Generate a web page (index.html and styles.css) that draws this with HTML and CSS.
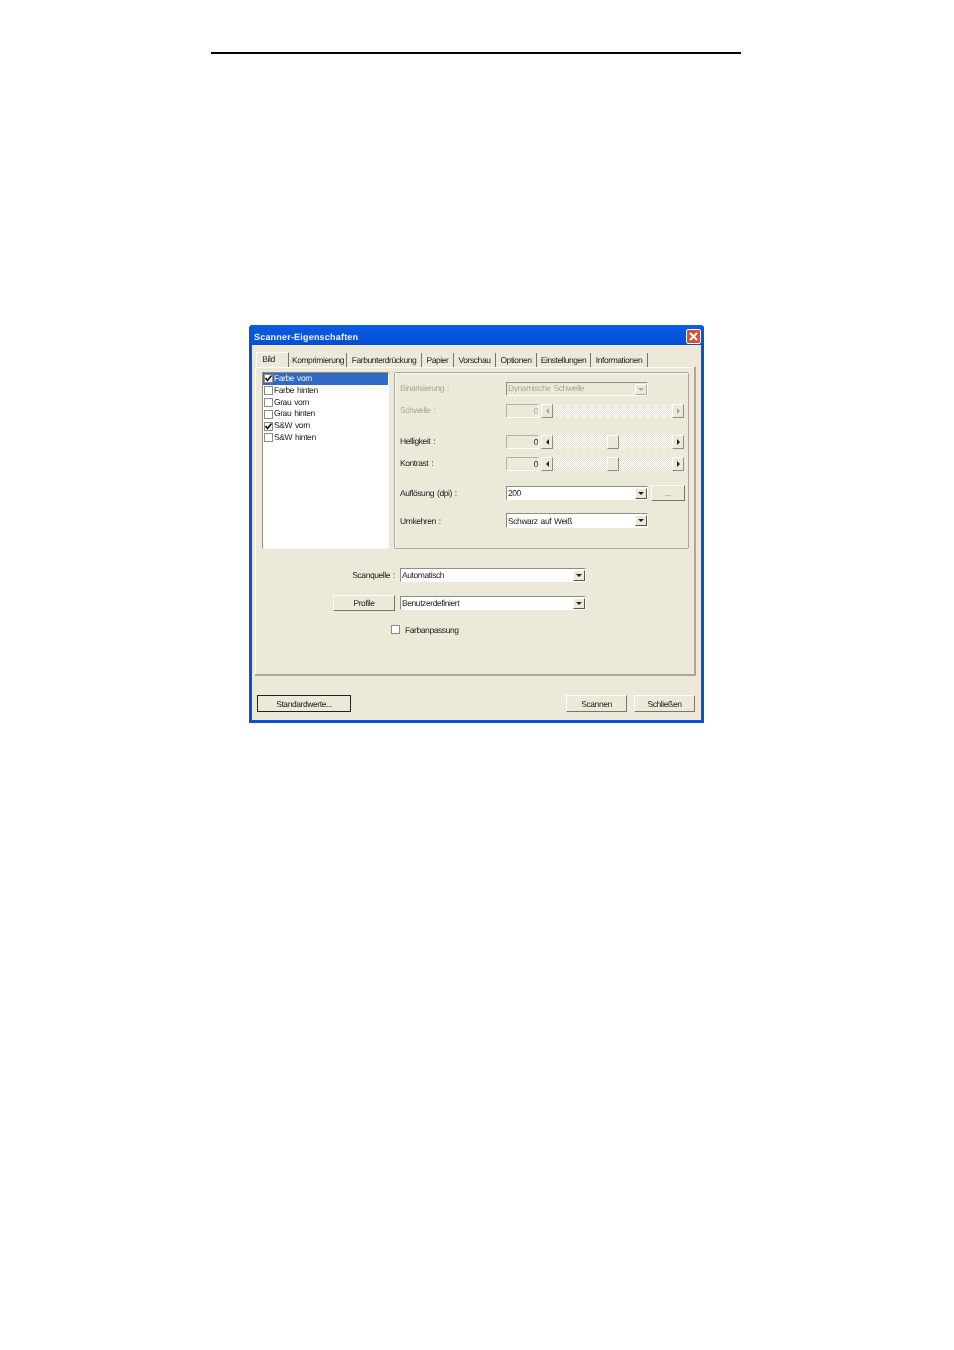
FILE: index.html
```html
<!doctype html>
<html>
<head>
<meta charset="utf-8">
<title>Scanner-Eigenschaften</title>
<link rel="stylesheet" href="styles.css">
</head>

<body>
<div class="rule"></div>
<div class="window">
	<div class="titlebar">
		<span class="title">Scanner-Eigenschaften</span>
		<span class="close">
			<svg width="15" height="15" viewBox="0 0 15 15"><path d="M4 4l7 7M11 4l-7 7" stroke="#fff" stroke-width="2" fill="none"/></svg>
		</span>
	</div>
	<div class="body">
		<ul class="tabs">
			<li class="tab active t1">Bild</li>
			<li class="tab t2">Komprimierung</li>
			<li class="tab t3">Farbunterdrückung</li>
			<li class="tab t4">Papier</li>
			<li class="tab t5">Vorschau</li>
			<li class="tab t6">Optionen</li>
			<li class="tab t7">Einstellungen</li>
			<li class="tab t8">Informationen</li>
		</ul>
		<div class="panel">
			<div class="top">
				<ul class="list">
					<li class="sel"><span class="check"><svg width="9" height="9" viewBox="0 0 9 9"><path d="M1.5 4l2 2.5L7.5 1.5" stroke="#111" stroke-width="1.6" fill="none"/></svg></span>Farbe vorn</li>
					<li><span class="check"></span>Farbe hinten</li>
					<li><span class="check"></span>Grau vorn</li>
					<li><span class="check"></span>Grau hinten</li>
					<li><span class="check"><svg width="9" height="9" viewBox="0 0 9 9"><path d="M1.5 4l2 2.5L7.5 1.5" stroke="#111" stroke-width="1.6" fill="none"/></svg></span>S&amp;W vorn</li>
					<li><span class="check"></span>S&amp;W hinten</li>
				</ul>
				<div class="group">
					<div class="row off lift">
						<label>Binarisierung :</label>
						<div class="combo"><span class="val">Dynamische Schwelle</span><span class="arrow"><i class="down"></i></span></div>
					</div>
					<div class="row off lift g8">
						<label>Schwelle :</label>
						<div class="num">0</div>
						<div class="scroller"><span class="sbtn"><i class="left"></i></span><span class="track"></span><span class="sbtn"><i class="right"></i></span></div>
					</div>
					<div class="row lift g17">
						<label>Helligkeit :</label>
						<div class="num">0</div>
						<div class="scroller"><span class="sbtn"><i class="left"></i></span><span class="track"><span class="thumb"></span></span><span class="sbtn"><i class="right"></i></span></div>
					</div>
					<div class="row lift g8">
						<label>Kontrast :</label>
						<div class="num">0</div>
						<div class="scroller"><span class="sbtn"><i class="left"></i></span><span class="track"><span class="thumb"></span></span><span class="sbtn"><i class="right"></i></span></div>
					</div>
					<div class="row g15">
						<label>Auflösung (dpi) :</label>
						<div class="combo"><span class="val">200</span><span class="arrow"><i class="down"></i></span></div>
						<div class="btn dots">...</div>
					</div>
					<div class="row tall g13">
						<label>Umkehren :</label>
						<div class="combo"><span class="val">Schwarz auf Weiß</span><span class="arrow"><i class="down"></i></span></div>
					</div>
				</div>
			</div>
			<div class="form">
				<label class="src">Scanquelle :</label>
				<div class="combo wide"><span class="val">Automatisch</span><span class="arrow"><i class="down"></i></span></div>
				<div class="btn">Profile</div>
				<div class="combo wide"><span class="val">Benutzerdefiniert</span><span class="arrow"><i class="down"></i></span></div>
			</div>
			<div class="match"><span class="check"></span>Farbanpassung</div>
		</div>
		<div class="footer">
			<div class="btn default">Standardwerte...</div>
			<div class="btn action">Scannen</div>
			<div class="btn action">Schließen</div>
		</div>
	</div>
</div>
</body>
</html>
```

FILE: styles.css
```css
ul{ padding:0; margin:0; list-style:none; }
body{ margin:0; background:#fff; font:8.5px/12px "Liberation Sans",Arial,sans-serif; letter-spacing:-.42px; word-spacing:1px; color:#1c1c1c; text-rendering:geometricPrecision; }
.rule{ width:530px; height:2px; margin:52px 0 0 211px; background:#000; }

.window{ width:455px; height:398px; margin:271px 0 0 249px; box-sizing:border-box; border:solid #0a4fd8; border-width:0 3px 3px; border-radius:4px 4px 0 0; background:#ece9d8; filter:blur(.3px); }
.titlebar{ box-sizing:border-box; height:20px; margin:0 -3px; padding:4px 3px 0 5px; display:flex; align-items:flex-start; justify-content:space-between; border-radius:4px 4px 0 0; background:linear-gradient(#0a5fe6,#0a58e0 20%,#0453dc 70%,#0a4ed0); }
.title{ padding-top:2px; font-weight:bold; font-size:9px; letter-spacing:.2px; word-spacing:0; color:#f2f6ff; }
.close{ width:15px; height:15px; border:1px solid #fff; border-radius:2px; box-sizing:border-box; display:flex; align-items:center; justify-content:center; background:#d8512c; }
.close svg{ flex:none; }

.body{ padding-top:7px; }
.tabs{ display:flex; height:15px; margin-left:4px; }
.tab{ box-sizing:border-box; padding-top:1px; text-align:center; border-right:1px solid #77746a; height:14px; margin-top:1px; }
.tab.active{ height:15px; margin-top:0; margin-right:1px; padding:0 8px 0 0; border:1px solid #fff; border-right:1px solid #77746a; border-bottom:0; }
.t1{ width:33px; }
.t2{ width:57px; }
.t3{ width:75px; }
.t4{ width:32px; }
.t5{ width:42px; }
.t6{ width:41px; }
.t7{ width:54px; }
.t8{ width:57px; }

.panel{ box-sizing:border-box; width:441px; height:309px; margin-left:3px; padding:5px 0 0 7px; border:solid #aca899; border-width:0 2px 2px 0; box-shadow:inset 1px 1px 0 #fff; }
.top{ display:flex; gap:5px; height:177px; }
.list{ box-sizing:border-box; width:127px; background:#fff; border-left:1px solid #8f8c80; border-top:1px solid #8f8c80; border-bottom:1px solid #f4f3ec; }
.list li{ height:11.8px; line-height:11.8px; display:flex; align-items:center; gap:1px; padding-left:1px; margin-right:1px; }
.list li.sel{ background:#316ac5; color:#f0f0f8; }
.check{ box-sizing:border-box; width:9px; height:9px; flex:none; display:inline-flex; border:1px solid #8a8a8a; background:#fff; }
.check svg{ flex:none; margin:-1px; }

.group{ box-sizing:border-box; width:295px; padding:9px 0 0 5px; border:1px solid #aca899; border-radius:2px; box-shadow:inset 1px 1px 0 #fff; }
.row{ display:flex; align-items:center; height:14px; }
.row label{ width:106px; flex:none; }
.lift label, .lift .val{ padding-bottom:2px; }
.off{ color:#aca899; }
.g8{ margin-top:8px; }
.g13{ margin-top:13px; }
.g15{ margin-top:15px; }
.g17{ margin-top:17px; }

.combo{ box-sizing:border-box; width:142px; height:14px; display:flex; align-items:center; justify-content:space-between; background:#fff; border:1px solid #8f8c80; border-right-color:#fff; border-bottom-color:#fff; }
.tall{ height:15px; }
.tall .combo{ height:15px; }
.off .combo{ background:#ece9d8; }
.val{ padding-left:1px; }
.arrow{ box-sizing:border-box; width:12px; height:11px; display:flex; align-items:center; justify-content:center; background:#ece9d8; border:1px solid; border-color:#fff #555 #555 #fff; }
.off .arrow{ border-color:#fff #aca899 #aca899 #fff; }
.down{ border:solid transparent; border-width:3px 3px 0; border-top-color:#222; }
.off .down{ border-top-color:#aca899; }
.left{ border:solid transparent; border-width:3px 3px 3px 0; border-right-color:#222; }
.right{ border:solid transparent; border-width:3px 0 3px 3px; border-left-color:#222; }
.off .left{ border-right-color:#aca899; }
.off .right{ border-left-color:#aca899; }

.num{ box-sizing:border-box; width:33px; height:14px; text-align:right; border:1px solid #b5b2a4; border-right-color:#fff; border-bottom-color:#fff; line-height:12px; }
.scroller{ display:flex; width:143px; height:14px; margin-left:2px; }
.sbtn{ box-sizing:border-box; width:12px; height:14px; flex:none; display:flex; align-items:center; justify-content:center; background:#ece9d8; border:1px solid; border-color:#fff #8f8c80 #8f8c80 #fff; }
.track{ position:relative; flex:1; background:repeating-conic-gradient(#fff 0 25%,#e3e0cf 0 50%) 0 0/2px 2px; }
.thumb{ position:absolute; top:0; left:54px; box-sizing:border-box; width:12px; height:14px; background:#ece9d8; border:1px solid; border-color:#fff #8f8c80 #8f8c80 #fff; }

.btn{ box-sizing:border-box; height:16px; display:flex; align-items:center; justify-content:center; background:#ece9d8; border:1px solid; border-color:#fff #77746a #77746a #fff; }
.dots{ width:34px; margin:-2px 0 -2px 3px; height:16px; color:#8f8c80; }

.form{ display:grid; grid-template-columns:62px 186px; column-gap:5px; row-gap:13px; align-items:center; margin:19px 0 0 71px; }
.src{ text-align:right; }
.wide{ width:186px; }
.match{ display:flex; align-items:center; gap:5px; margin:14px 0 0 129px; height:9px; }

.footer{ display:flex; gap:7px; height:17px; margin:19px 6px 0 5px; }
.btn.default{ width:94px; height:17px; margin-right:auto; outline:1px solid #222; outline-offset:-1px; }
.btn.action{ width:61px; height:17px; }
```
